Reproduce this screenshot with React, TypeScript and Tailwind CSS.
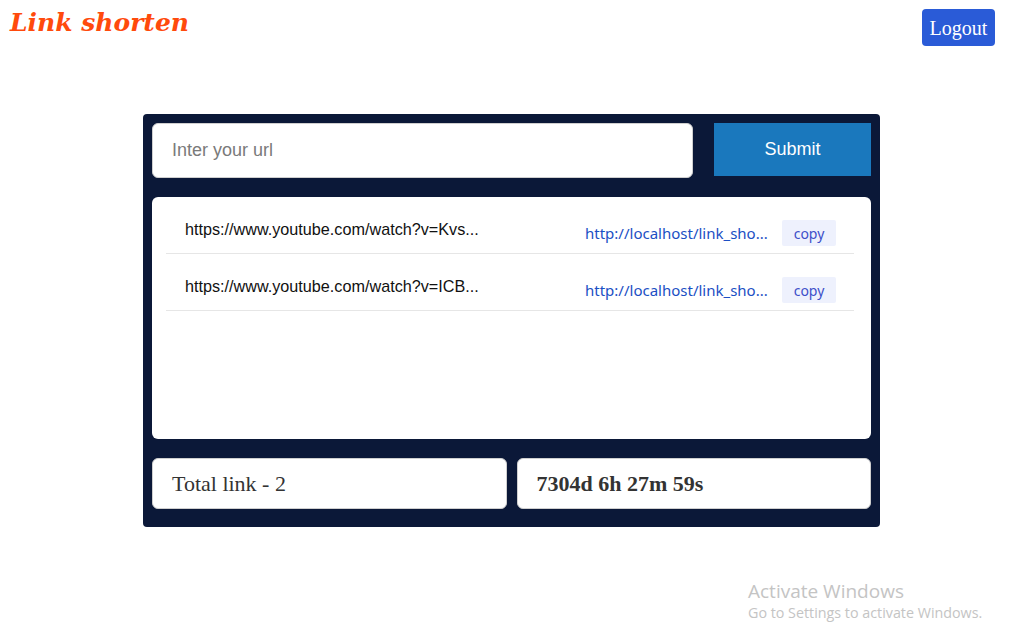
import React from 'react';

const links = [
  { long: 'https://www.youtube.com/watch?v=Kvs...', short: 'http://localhost/link_sho...' },
  { long: 'https://www.youtube.com/watch?v=ICB...', short: 'http://localhost/link_sho...' },
];

export default function App() {
  return (
    <div className="relative h-[624px] w-[1020px] bg-white overflow-hidden">
      {/* header */}
      <header className="flex items-start justify-between pl-[10px] pr-[25px] pt-[9px]">
        <h1 className="text-[25px] leading-[28px] font-bold italic text-[#ff4a0c] font-['DejaVu_Serif',serif]">
          Link shorten
        </h1>
        <button className="h-[37px] w-[73px] rounded-[4px] bg-[#2a5bd7] text-[20px] text-white font-['Liberation_Serif',serif]">
          Logout
        </button>
      </header>

      {/* main card */}
      <main className="ml-[143px] mt-[68px] w-[737px] rounded-[4px] bg-[#0b1838] p-[9px] pb-[18px]">
        <div className="flex items-start gap-[21px]">
          <input
            placeholder="Inter your url"
            className="h-[55px] flex-1 rounded-[6px] border border-[#cfcfcf] bg-white px-[19px] text-[18px] outline-none placeholder:text-[#7a7a7a] font-['Liberation_Sans',sans-serif]"
          />
          <button className="h-[53px] w-[157px] bg-[#1a78bd] text-[18px] text-white font-['Liberation_Sans',sans-serif]">
            Submit
          </button>
        </div>

        <div className="mt-[19px] h-[242px] rounded-[6px] bg-white pl-[14px] pr-[17px]">
          {links.map((l, i) => (
            <div key={i} className="flex items-start justify-between border-b border-[#e6e6e6] pl-[19px] pr-[18px] pt-[24px] pb-[7px]">
              <span className="text-[16.2px] leading-[16px] text-[#111] font-['Liberation_Sans',sans-serif]">{l.long}</span>
              <div className="flex items-center gap-[12px] -mt-[1px]">
                <span className="w-[185px] truncate text-[15px] leading-[20px] text-[#1b4fc4] font-['Noto_Sans',sans-serif]">
                  {l.short}
                </span>
                <button className="h-[26px] w-[54px] rounded-[2px] bg-[#eef1fd] text-[14px] text-[#3d4fc9] font-['Noto_Sans',sans-serif]">
                  copy
                </button>
              </div>
            </div>
          ))}
        </div>

        <div className="mt-[19px] grid grid-cols-2 gap-[10px]">
          <div className="flex h-[51px] items-center rounded-[6px] border border-[#cfcfcf] bg-white px-[19px] text-[22px] text-[#333] font-['Liberation_Serif',serif]">
            Total link - 2
          </div>
          <div className="flex h-[51px] items-center rounded-[6px] border border-[#cfcfcf] bg-white px-[19px] text-[22px] font-bold text-[#333] font-['Liberation_Serif',serif]">
            7304d 6h 27m 59s
          </div>
        </div>
      </main>

      {/* windows watermark */}
      <div className="absolute left-[748px] top-[579px] text-[#c4c4c4] font-['Open_Sans','Noto_Sans',sans-serif]">
        <div className="text-[19px] leading-[24px]">Activate Windows</div>
        <div className="text-[14.3px] leading-[20px]">Go to Settings to activate Windows.</div>
      </div>
    </div>
  );
}
